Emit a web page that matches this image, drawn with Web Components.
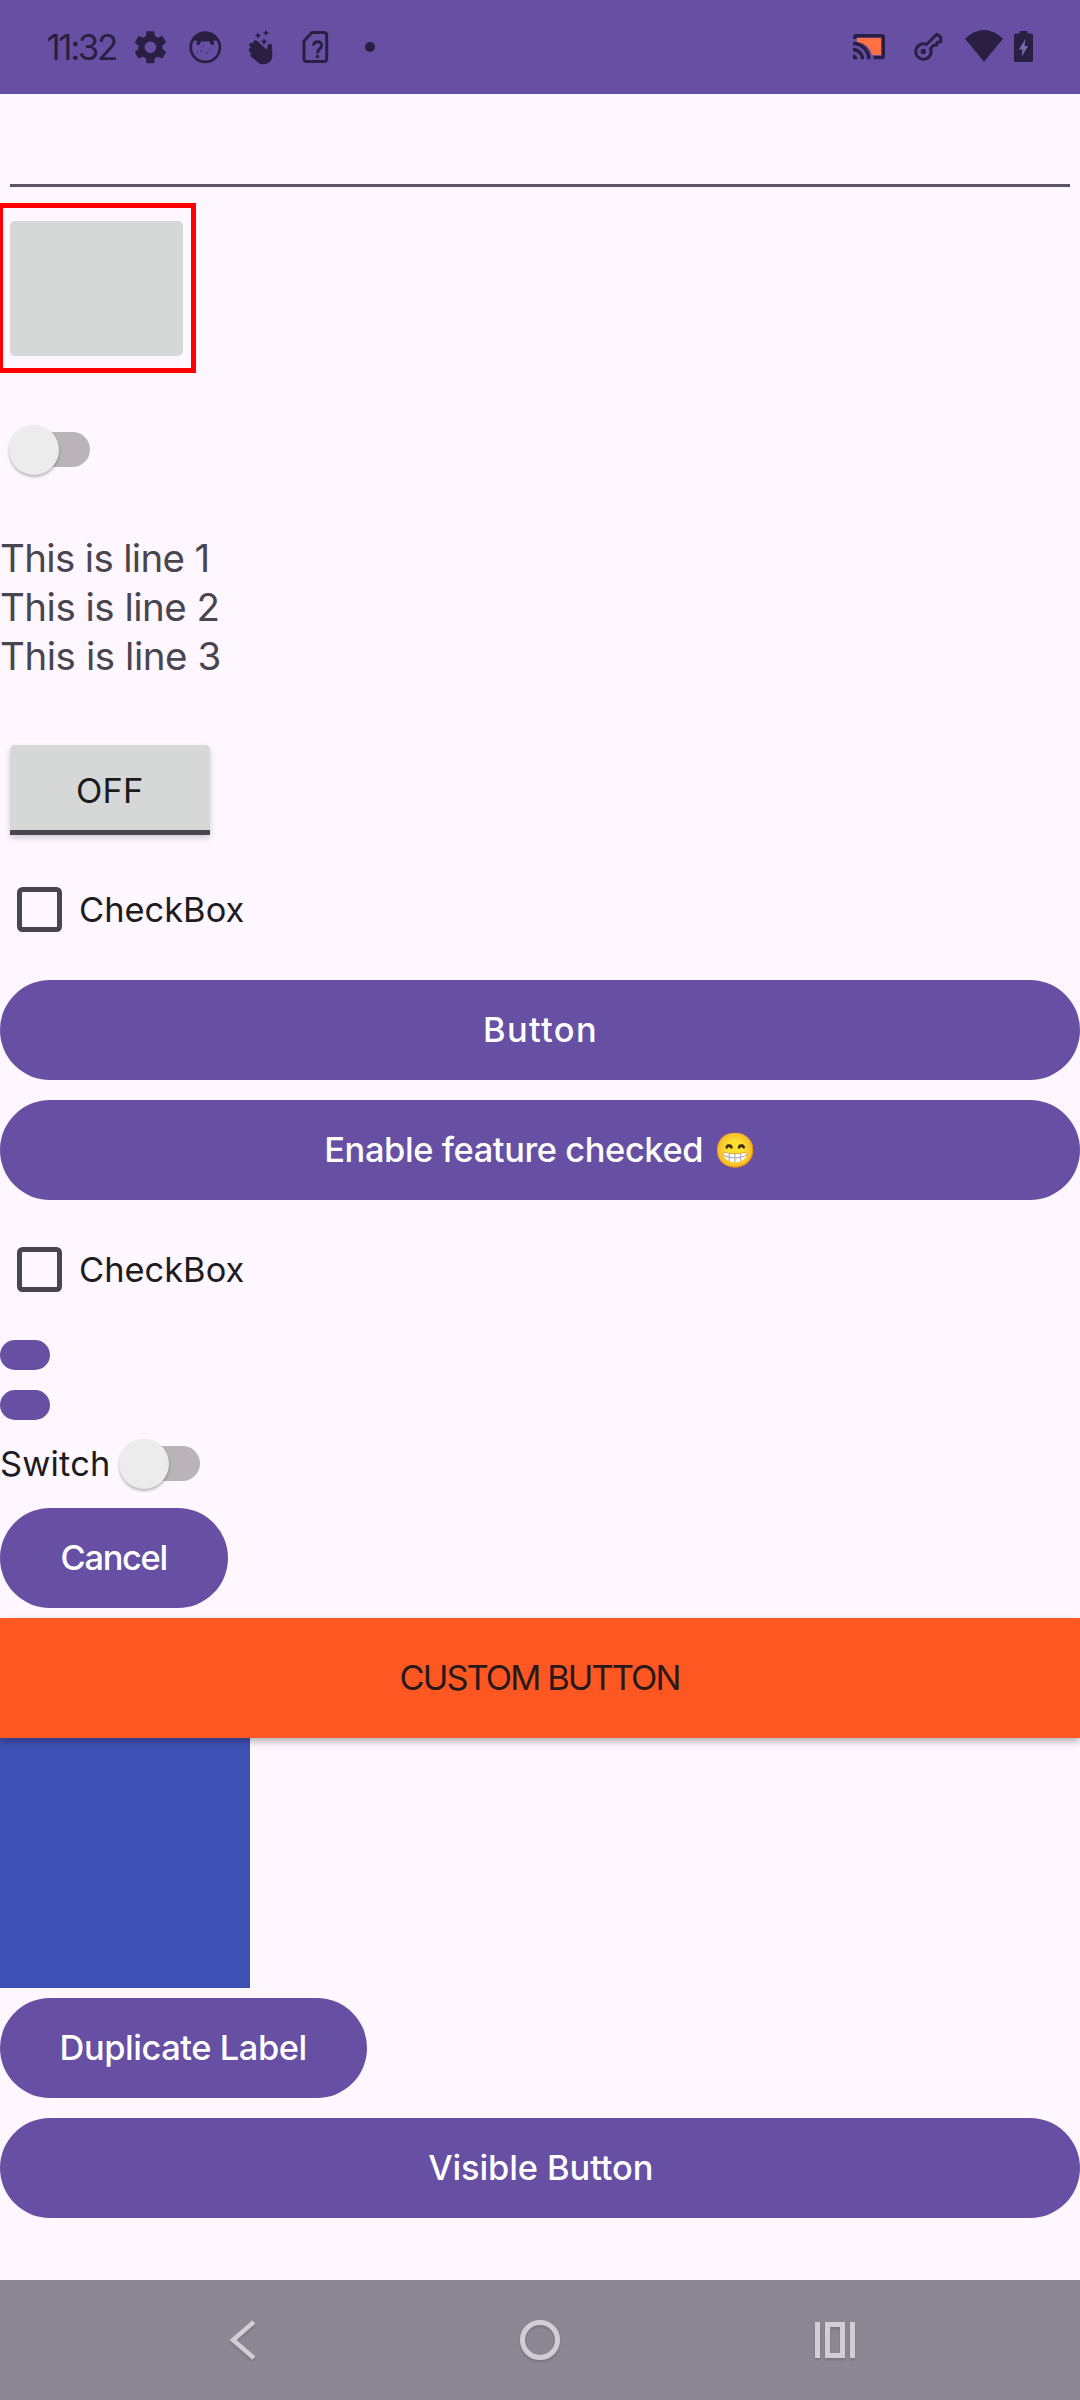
<!DOCTYPE html>
<html lang="en">
<head>
<meta charset="utf-8">
<title>Widgets</title>
<style>
html,body{margin:0;padding:0}
body{width:1080px;height:2400px;overflow:hidden;background:#fef7ff;font-family:Inter,"Open Sans",sans-serif}
</style>
</head>
<body>
<widget-screen></widget-screen>
<script>
const define = (name, html, setup) => {
  const t = document.createElement('template');
  t.innerHTML = html;
  customElements.define(name, class extends HTMLElement {
    connectedCallback() {
      if (this.shadowRoot) return;
      this.attachShadow({mode: 'open'}).append(t.content.cloneNode(true));
      if (setup) setup(this, this.shadowRoot);
    }
  });
};

/* A single-line label whose box hugs its ink and is tracked to a given width. */
const pen = document.createElement('canvas').getContext('2d');
define('fit-label', `<style>:host{display:block;flex:none;white-space:pre}span{display:block;line-height:inherit}</style><span></span>`, (host, root) => {
  const text = host.getAttribute('text'), w = +host.getAttribute('w');
  const size = +host.getAttribute('size') || 34.4, weight = host.getAttribute('weight') || 400;
  const s = root.querySelector('span');
  s.textContent = text;
  pen.font = `${weight} ${size}px Inter`;
  const m = pen.measureText(text);
  const ls = (w - (m.actualBoundingBoxRight + m.actualBoundingBoxLeft)) / (text.length - 1);
  s.style.cssText = `font-size:${size}px;font-weight:${weight};letter-spacing:${ls}px;margin-left:${m.actualBoundingBoxLeft}px`;
  host.style.width = w + 'px';
});

define('status-bar', `<style>
:host{display:flex;height:94px;background:#6750a4;color:#2a1f43;align-items:flex-start;box-sizing:border-box;padding:0 42px 0 47.5px}
fit-label{line-height:95px;margin-right:14px}
svg{display:block;flex:none;height:94px}
.sp{flex:1}
</style>
<fit-label text="11:32" w="68.5" size="35"></fit-label>
<svg width="40" viewBox="130 0 40 94"><path fill="#2a1f43" transform="translate(131.2 28) scale(1.6)" d="M19.43 12.98c.04-.32.07-.64.07-.98s-.03-.66-.07-.98l2.11-1.65c.19-.15.24-.42.12-.64l-2-3.46c-.12-.22-.39-.3-.61-.22l-2.49 1c-.52-.4-1.08-.73-1.69-.98l-.38-2.65C14.46 2.18 14.25 2 14 2h-4c-.25 0-.46.18-.49.42l-.38 2.65c-.61.25-1.17.59-1.69.98l-2.49-1c-.23-.09-.49 0-.61.22l-2 3.46c-.13.22-.07.49.12.64l2.11 1.65c-.04.32-.07.65-.07.98s.03.66.07.98l-2.11 1.65c-.19.15-.24.42-.12.64l2 3.46c.12.22.39.3.61.22l2.49-1c.52.4 1.08.73 1.69.98l.38 2.65c.03.24.24.42.49.42h4c.25 0 .46-.18.49-.42l.38-2.65c.61-.25 1.17-.59 1.69-.98l2.49 1c.23.09.49 0 .61-.22l2-3.46c.12-.22.07-.49-.12-.64l-2.11-1.65zM12 15.6c-1.98 0-3.6-1.62-3.6-3.6s1.62-3.6 3.6-3.6 3.6 1.62 3.6 3.6-1.62 3.6-3.6 3.6z"/></svg>
<svg width="40" viewBox="185 0 40 94" style="margin-left:15px"><circle cx="205.3" cy="47.3" r="14.6" fill="none" stroke="#2a1f43" stroke-width="2.8"/><path fill="#2a1f43" d="M192.5 40Q197 32 205.3 32Q213.600 32 218 40Q215 41 213.500 40.500L214 44.500L211 45L209.500 41.500H201L199.500 45L196.500 44.500L197 40.500Q195 41 192.500 40Z"/><g fill="#2a1f43"><circle cx="197.500" cy="44" r=".9"/><circle cx="213" cy="44" r=".9"/><circle cx="201" cy="51" r=".7"/><circle cx="207" cy="53" r=".8"/><circle cx="210" cy="49" r=".6"/><circle cx="197" cy="52" r=".6"/><circle cx="203" cy="47" r=".5"/></g></svg>
<svg width="40" viewBox="240 0 40 94" style="margin-left:15px"><g fill="none" stroke="#2a1f43" stroke-width="4.400" stroke-linecap="round"><path d="M255.500 42.500L266 52M251.500 45L264 56M251 50L263 60M252.500 55L261 62"/></g><path fill="#2a1f43" d="M258 46L266.500 52.500L267.500 46Q268.500 42.500 272 44.500L272.300 57Q271 64.500 263 64.300Q260 64 257 61Z"/><path fill="#2a1f43" d="M258 32l1 2.400 2.400 1-2.400 1-1 2.400-1-2.400-2.400-1 2.400-1zM266 29.500l1 2.400 2.400 1-2.400 1-1 2.400-1-2.400-2.400-1 2.400-1zM264 38l1.100 2.500 2.500 1.100-2.500 1.100-1.100 2.500-1.100-2.500-2.500-1.100 2.500-1.100z"/></svg>
<svg width="40" viewBox="295 0 40 94" style="margin-left:15px"><g fill="none" stroke="#2a1f43" stroke-width="3"><path stroke-linejoin="round" d="M312 32.500H324Q326.700 32.500 326.700 35.500V58.500Q326.700 61.500 324 61.500H307Q304 61.500 304 58.500V41Z"/><path d="M313.500 45.500Q313.800 41.700 317.500 41.700Q321.500 41.700 321.500 45.500Q321.500 47.500 319.500 49Q317.500 50.500 317.500 53.500"/></g><circle cx="317.500" cy="56.500" r="1.700" fill="#2a1f43"/></svg>
<svg width="20" viewBox="360 0 20 94" style="margin-left:25px"><circle cx="370" cy="47" r="5" fill="#2a1f43"/></svg>
<span class="sp"></span>
<svg width="42" viewBox="848 0 42 94"><path fill="#ff7043" d="M857 38H881V55H872Q870 44 857 42Z"/><g fill="none" stroke="#2a1f43" stroke-width="3.400"><path d="M854.700 39V37Q854.700 35.700 856 35.700H882Q883.300 35.700 883.300 37V56.300Q883.300 57.600 882 57.600H873.500"/><path d="M853 43.500A15.500 15.500 0 0 1 868.800 59.200M853 49.500A9.800 9.800 0 0 1 862.600 59.200"/></g><path fill="#2a1f43" d="M853 54.500A4.700 4.700 0 0 1 857.700 59.200H853Z"/></svg>
<svg width="38" viewBox="910 0 38 94" style="margin-left:20px"><circle cx="923.300" cy="51.500" r="2.700" fill="#2a1f43"/><path fill="none" stroke="#2a1f43" stroke-width="3" stroke-linejoin="round" d="M926.500 44.500L936.700 34.300L940.700 37V42L937.200 42.300L936.500 45.300L933.500 45.300L930.500 48.500A7.700 7.700 0 1 1 926.500 44.500Z"/></svg>
<svg width="44" viewBox="962 0 44 94" style="margin-left:14px"><path fill="#2a1f43" d="M965 38.700Q984 21.500 1003 38.700L984 61.700Z"/></svg>
<svg width="28" viewBox="1010 0 28 94" style="margin-left:4px"><path fill="#2a1f43" d="M1019.500 31H1027.500V33.500H1031.500Q1033 33.500 1033 35V60.500Q1033 62 1031.500 62H1015.500Q1014 62 1014 60.500V35Q1014 33.500 1015.500 33.500H1019.500Z"/><path fill="#7d68b2" d="M1025.300 39L1019 49.500H1022.500L1021.800 56.500L1028 46H1024.500Z"/></svg>`);

define('image-tile', `<style>
:host{display:block;box-sizing:border-box;width:198px;height:170px;margin:16.300px 0 0 -2.400px;border:5px solid #f00;padding:12.500px 7.400px}
div{width:173px;height:135px;border-radius:5px;background:#d6d8d7}
</style><div></div>`);

define('switch-toggle', `<style>
:host{display:flex;align-items:center;width:81px;height:50px}
.thumb{flex:none;width:50px;height:50px;border-radius:50%;background:#ececec;box-shadow:0 2px 3px rgba(0,0,0,.28);z-index:1}
.track{flex:none;width:62px;height:35px;margin-left:-31px;border-radius:0 18px 18px 0;background:#bab4ba}
</style><div class="thumb"></div><div class="track"></div>`);

define('check-row', `<style>
:host{display:flex;align-items:center;height:100px;padding-left:17px;color:#1d1b20}
i{box-sizing:border-box;width:45px;height:45px;border:5px solid #49454f;border-radius:5.500px;margin-right:19px}
fit-label{line-height:100px}
</style><i></i><fit-label text="CheckBox" w="162.500"></fit-label>`);

define('pill-button', `<style>
:host{display:flex;align-items:center;justify-content:center;box-sizing:border-box;height:100px;border-radius:50px;background:#6750a4;color:#fff;line-height:100px}
</style><slot></slot>`);

define('chip-button', `<style>:host{display:block;width:50px;height:30px;border-radius:15px;background:#6750a4}</style>`);

define('toggle-button', `<style>
:host{display:flex;justify-content:center;box-sizing:border-box;width:200px;height:90px;border-radius:5px 5px 0 0;border-bottom:5px solid #49454f;background:#d6d8d7;color:#1b1b1c;line-height:91px;box-shadow:0 3px 6px rgba(0,0,0,.18)}
</style><fit-label text="OFF" w="64"></fit-label>`);

define('nav-bar', `<style>
:host{display:flex;justify-content:space-between;align-items:center;box-sizing:border-box;height:120px;padding:0 215px;background:#8b8893}
svg{display:block;width:60px;height:60px;fill:none;stroke:#d1ced7;stroke-width:5;filter:drop-shadow(0 2px 1px rgba(0,0,0,.15))}
</style>
<svg viewBox="215 2310 60 60"><path stroke-width="4.500" d="M253.800 2322L233 2340L253.800 2358"/></svg>
<svg viewBox="510 2310 60 60"><circle cx="540" cy="2340" r="17.500"/></svg>
<svg viewBox="805 2310 60 60"><path d="M817.500 2322V2358M852.500 2322V2358M827.500 2324.500H842.500V2355.500H827.500Z"/></svg>`);

define('widget-screen', `<style>
:host{display:flex;flex-direction:column;width:1080px;height:2400px;background:#fef7ff}
main{flex:1;display:flex;flex-direction:column;align-items:flex-start;min-height:0}
.wide{align-self:stretch}
.field{align-self:stretch;height:90px;margin:0 10px;border-bottom:3px solid #5a5560}
.lines{margin:59px 0 0 1px;color:#49454f;line-height:49px}
.row{display:flex;align-items:center;height:60px;margin-top:14px;color:#1d1b20;line-height:60px}
.custom{position:relative;align-self:stretch;display:flex;justify-content:center;height:120px;line-height:120px;margin-top:10px;background:#ff5722;color:#28191a;box-shadow:0 4px 7px rgba(0,0,0,.27)}
.blue{width:250px;height:250px;background:#3f51b5}
</style>
<status-bar></status-bar>
<main>
<div class="field"></div>
<image-tile></image-tile>
<switch-toggle style="margin:51.700px 0 0 9px"></switch-toggle>
<div class="lines">
<fit-label text="This is line 1" w="206.500" size="38.500"></fit-label>
<fit-label text="This is line 2" w="216.500" size="38.500"></fit-label>
<fit-label text="This is line 3" w="218.500" size="38.500"></fit-label>
</div>
<toggle-button style="margin:64px 0 0 10px"></toggle-button>
<check-row style="margin-top:25px"></check-row>
<pill-button class="wide" style="margin-top:20px"><fit-label text="Button" w="110" weight="500"></fit-label></pill-button>
<pill-button class="wide" style="margin-top:20px"><fit-label text="Enable feature checked" w="375" weight="500"></fit-label><span style="font-size:34px;margin-left:13px;width:39.500px;white-space:nowrap;font-family:'Noto Color Emoji',sans-serif">😁</span></pill-button>
<check-row style="margin-top:20px"></check-row>
<chip-button style="margin-top:20px"></chip-button>
<chip-button style="margin-top:20px"></chip-button>
<div class="row"><fit-label text="Switch" w="107" style="margin:0 11px 0 1px"></fit-label><switch-toggle></switch-toggle></div>
<pill-button style="width:228px;margin-top:14px"><fit-label text="Cancel" w="105" weight="500"></fit-label></pill-button>
<div class="custom"><fit-label text="CUSTOM BUTTON" w="277"></fit-label></div>
<div class="blue"></div>
<pill-button style="width:367px;margin-top:10px"><fit-label text="Duplicate Label" w="244" weight="500"></fit-label></pill-button>
<pill-button class="wide" style="margin-top:20px"><fit-label text="Visible Button" w="223.500" weight="500"></fit-label></pill-button>
</main>
<nav-bar></nav-bar>`);
</script>
</body>
</html>
